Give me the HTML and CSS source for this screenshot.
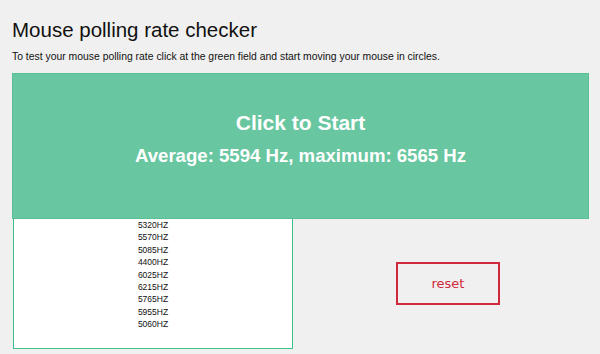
FILE: index.html
```html
<!DOCTYPE html>
<html lang="en">
<head>
    <meta charset="UTF-8" />
    <title>Mouse polling rate checker</title>
    <link rel="stylesheet" href="styles.css">
</head>
<body>
    <h1>Mouse polling rate checker</h1>
    <p class="intro">To test your mouse polling rate click at the green field and start moving your mouse in circles.</p>

    <div class="field" id="field">
        <div class="field-title">Click to Start</div>
        <div class="field-stats">Average: 5594 Hz, maximum: 6565 Hz</div>
    </div>

    <div class="bottom">
        <div class="log" id="log">
            <div>5320HZ</div>
            <div>5570HZ</div>
            <div>5085HZ</div>
            <div>4400HZ</div>
            <div>6025HZ</div>
            <div>6215HZ</div>
            <div>5765HZ</div>
            <div>5955HZ</div>
            <div>5060HZ</div>
        </div>
        <div class="actions">
            <button id="resetBtn">reset</button>
        </div>
    </div>
</body>
</html>
```

FILE: styles.css
```css
body {
    margin: 0;
    padding: 0 11px 0 12px;
    background: #f0f0f0;
    font-family: "Liberation Sans", Arial, sans-serif;
    color: #111;
}

h1 {
    margin: 0;
    padding-top: 17px;
    font-size: 20.5px;
    font-weight: normal;
    line-height: 26px;
}

.intro {
    margin: 7px 0 0;
    font-size: 10.4px;
    line-height: 14px;
}

.field {
    margin-top: 9px;
    height: 146px;
    background: #68c6a0;
    border: 1px solid #5abf94;
    color: #fff;
    text-align: center;
    font-weight: bold;
    padding-top: 36px;
    box-sizing: border-box;
}

.field-title {
    font-size: 21px;
    line-height: 26px;
}

.field-stats {
    margin-top: 9px;
    font-size: 18.6px;
    line-height: 22px;
}

.bottom {
    display: flex;
}

.log {
    width: 280px;
    height: 130px;
    box-sizing: border-box;
    margin-left: 1px;
    background: #fff;
    border: 1px solid #3fc08b;
    border-top: none;
    text-align: center;
    font-size: 8.5px;
    line-height: 12.4px;
}

.actions {
    flex: 1;
    display: flex;
    justify-content: center;
    padding-top: 43px;
    padding-left: 14px;
}

button {
    width: 104px;
    height: 43px;
    background: #f0f0f0;
    border: 2px solid #d0283c;
    color: #d0283c;
    font-family: "DejaVu Sans", Verdana, sans-serif;
    font-size: 13px;
    cursor: pointer;
}
```
